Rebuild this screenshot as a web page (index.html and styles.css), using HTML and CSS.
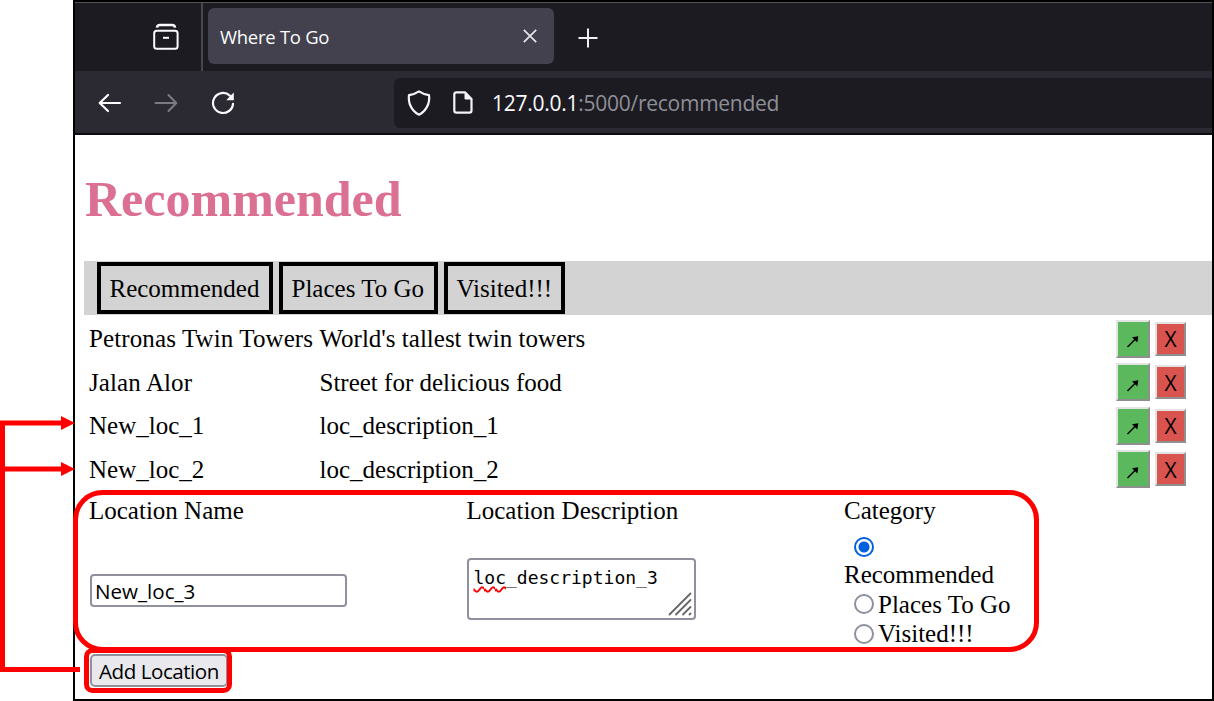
FILE: index.html
```html
<!DOCTYPE html>
<html lang="en">
<head>
<meta charset="utf-8">
<title>Where To Go</title>
<link rel="stylesheet" href="styles.css">
</head>
<body>
<div class="window">
  <header class="tabs">
    <div class="tabs-left">
      <svg width="28" height="28" viewBox="0 0 28 28" fill="none" stroke="#fbfbfe" stroke-width="2">
        <path d="M5 4.600Q5.300 2 8 2h12q2.700 0 3 2.600" stroke-width="2.600"/>
        <rect x="2.200" y="7.800" width="23.400" height="18" rx="2.500"/>
        <path d="M11 14.800h6"/>
      </svg>
    </div>
    <div class="tab">
      <span class="tab-title">Where To Go</span>
      <svg width="14" height="14" viewBox="0 0 14 14" stroke="#e6e6ea" stroke-width="1.700"><path d="M.8.8l12.400 12.400M13.200.8L.8 13.200"/></svg>
    </div>
    <svg class="plus" width="20" height="20" viewBox="0 0 20 20" stroke="#f0f0f4" stroke-width="2"><path d="M10 .5v19M.5 10h19"/></svg>
  </header>
  <div class="toolbar">
    <svg class="back" width="24" height="20" viewBox="0 0 24 20" fill="none" stroke="#fbfbfe" stroke-width="2.200" stroke-linecap="round" stroke-linejoin="round"><path d="M22 10H2M10 2L1.700 10l8.300 8"/></svg>
    <svg class="forward" width="24" height="20" viewBox="0 0 24 20" fill="none" stroke="#7b7a82" stroke-width="2" stroke-linecap="round" stroke-linejoin="round"><path d="M1.500 10H22M14.500 2L22.300 10l-7.800 8"/></svg>
    <svg class="reload" width="24" height="24" viewBox="0 0 24 24" fill="none" stroke="#fbfbfe" stroke-width="2.200"><path d="M18.800 4.600A10 10 0 1 0 22 12.800" stroke-linecap="round"/><path d="M22.800 1.500v7.700h-7.600z" fill="#fbfbfe" stroke="none"/></svg>
    <div class="url">
      <svg width="24" height="26" viewBox="0 0 24 26" fill="none" stroke="#f4f4f8" stroke-width="2.200" stroke-linejoin="round"><path d="M12 1.300Q16.500 4.300 22 5.200Q22.600 9.500 21.300 14Q18.500 21.500 12 24.700Q5.500 21.500 2.700 14Q1.400 9.500 2 5.200Q7.500 4.300 12 1.300z"/></svg>
      <svg class="page" width="20" height="23" viewBox="0 0 20 23" fill="none" stroke="#f4f4f8" stroke-width="2.200" stroke-linejoin="round"><path d="M12 1.300H3.500q-2.200 0-2.200 2.200v16q0 2.200 2.200 2.200h12.800q2.200 0 2.200-2.200V8z"/><path d="M12 1.300V8h6.500z" fill="#f4f4f8" stroke-width="1"/></svg>
      <span class="address"><b>127.0.0.1</b>:5000/recommended</span>
    </div>
  </div>
  <main class="content">
    <h1>Recommended</h1>
    <nav><a class="n1">Recommended</a><a class="n2">Places To Go</a><a class="n3">Visited!!!</a></nav>
    <div class="list">
      <div class="row"><span class="wide">Petronas Twin Towers</span><span>World's tallest twin towers</span><button class="go"><svg width="14" height="14" viewBox="0 0 14 14"><path d="M1.500 13L10 4.500" stroke="#000" stroke-width="1.500"/><path d="M6 3.200L12.300 2.200 11.300 8.500z"/></svg></button><button class="del">X</button></div>
      <div class="row"><span class="wide">Jalan Alor</span><span>Street for delicious food</span><button class="go"><svg width="14" height="14" viewBox="0 0 14 14"><path d="M1.500 13L10 4.500" stroke="#000" stroke-width="1.500"/><path d="M6 3.200L12.300 2.200 11.300 8.500z"/></svg></button><button class="del">X</button></div>
      <div class="row"><span>New_loc_1</span><span>loc_description_1</span><button class="go"><svg width="14" height="14" viewBox="0 0 14 14"><path d="M1.500 13L10 4.500" stroke="#000" stroke-width="1.500"/><path d="M6 3.200L12.300 2.200 11.300 8.500z"/></svg></button><button class="del">X</button></div>
      <div class="row"><span>New_loc_2</span><span>loc_description_2</span><button class="go"><svg width="14" height="14" viewBox="0 0 14 14"><path d="M1.500 13L10 4.500" stroke="#000" stroke-width="1.500"/><path d="M6 3.200L12.300 2.200 11.300 8.500z"/></svg></button><button class="del">X</button></div>
    </div>
    <form>
      <div class="fields">
        <div class="field"><label>Location Name</label><div class="input">New_loc_3</div></div>
        <div class="field"><label>Location Description</label>
          <div class="area"><span class="area-text"><span class="typo">loc</span>_description_3</span>
            <svg width="24" height="24" viewBox="0 0 24 24" stroke="#666" stroke-width="1.800" stroke-linecap="round"><path d="M1.500 22.500l21-21M8 22.500L22.500 8M15 22.500l7.500-7.500M21.500 22.500l1-1"/></svg></div>
        </div>
        <div class="field cat"><label>Category</label>
          <i class="radio on"></i>
          <span class="opt first">Recommended</span>
          <span class="opt"><i class="radio"></i>Places To Go</span>
          <span class="opt"><i class="radio"></i>Visited!!!</span>
        </div>
      </div>
      <button class="add" type="button">Add Location</button>
    </form>
  </main>
</div>
<svg class="notes" width="1214" height="701" viewBox="0 0 1214 701" fill="none" stroke="#f00" stroke-width="5">
  <rect x="75.500" y="492.500" width="961" height="157" rx="27"/>
  <rect x="86.500" y="650.500" width="143" height="40" rx="6"/>
  <path d="M80 669.500H2.500V423H62M2.500 469H62"/>
  <path d="M61 416l14 7-14 7zM61 462l14 7-14 7z" fill="#f00" stroke="none"/>
</svg>
</body>
</html>
```
FILE: styles.css
```css
* { box-sizing: border-box; }
body { margin: 0; background: #fff; position: relative; height: 701px; overflow: hidden; font-family: "Liberation Serif", serif; font-size: 25px; color: #000; }
svg { display: block; flex: none; }
.window { margin-left: 73px; width: 1141px; height: 701px; border: 2px solid #000; }
.tabs { height: 69px; background: #1c1b22; border-top: 1px solid #55545a; display: flex; align-items: center; }
.tabs-left { width: 128px; height: 68px; border-right: 2px solid #47464d; display: flex; align-items: center; padding: 0 0 0 77px; }
.tab { width: 346px; height: 56px; margin: 0 0 2px 5px; background: #42414d; border-radius: 6px; display: flex; align-items: center; justify-content: space-between; padding: 0 17px 0 12px; }
.tab-title { font: 18.500px/24px "Open Sans", sans-serif; letter-spacing: -.28px; color: #fbfbfe; padding-top: 2px; white-space: nowrap; }
.plus { margin: 1px 0 0 24px; }
.toolbar { height: 64px; background: #2b2a33; border-bottom: 2px solid #0c0c0d; display: flex; align-items: center; padding: 1px 0 0 23px; }
.forward { margin-left: 32px; }
.reload { margin-left: 33px; }
.url { margin-left: 159px; flex: 1; height: 50px; background: #1c1b22; border-radius: 6px 0 0 6px; display: flex; align-items: center; padding-left: 13px; }
.page { margin-left: 22px; }
.address { margin-left: 19px; font: 21px/30px "Open Sans", sans-serif; letter-spacing: -.26px; color: #8f8f97; white-space: nowrap; padding-top: 1px; }
.address b { font-weight: 400; color: #fbfbfe; }
.content { padding-left: 9px; }
h1 { margin: 35px 0 0; padding-left: 1px; font-size: 50px; line-height: 58px; color: #db7093; height: 91px; }
nav { height: 54px; background: #d3d3d3; display: flex; gap: 6px; padding: 1px 0 1px 13px; }
nav a { border: 4px solid #000; padding-left: 8.500px; line-height: 45px; white-space: nowrap; }
.n1 { width: 176px; }
.n2 { width: 159px; }
.n3 { width: 121px; }
.list { padding: 2px 0 0 5px; }
.row { height: 43.500px; display: grid; grid-template-columns: 230.500px 796.500px 34px 31px; align-items: center; white-space: nowrap; }
.row span { padding-top: 1px; }
.wide { letter-spacing: .11px; }
.row button { font: 21px/24px "Open Sans", sans-serif; padding: 1px 0 0; color: #000; border: 2.500px outset #e3e3e3; }
.go { width: 34px; height: 38px; background: #5cb85c; display: flex; align-items: center; justify-content: center; }
.go svg { margin: 4px 0 0; }
.del { width: 31px; height: 34px; margin-left: 5px; background: #d9534f; }
.fields { display: grid; grid-template-columns: 377.500px 377.500px 200px; padding-left: 5px; height: 163px; }
.field label { display: block; height: 30px; line-height: 30px; padding-top: 5px; white-space: nowrap; }
.input { width: 257px; height: 33px; margin: 53px 0 0 1px; border: 2px solid #8f8f9d; border-radius: 4px; font: 20.600px/30px "Open Sans", sans-serif; padding-left: 3px; }
.area { width: 229px; height: 62px; margin-top: 37px; border: 2px solid #8f8f9d; border-radius: 4px; display: flex; align-items: flex-end; padding: 0 2px 2px 5px; }
.area-text { font: 18px/24px "DejaVu Sans Mono", monospace; align-self: flex-start; padding-top: 6px; width: 195px; }
.typo { text-decoration: underline wavy #f00 1.500px; text-underline-offset: 2px; text-decoration-skip-ink: none; }
.radio { display: inline-block; width: 20px; height: 20px; border: 2.500px solid #8f8f9d; border-radius: 50%; flex: none; margin: 0 4px 0 10px; background: #fff; }
.on { display: block; border-color: #0060df; background: radial-gradient(circle, #0060df 5px, #fff 6px); margin-top: 16px; }
.opt { display: flex; align-items: center; height: 29.500px; line-height: 29px; white-space: nowrap; }
.first { margin-top: 3px; }
.add { display: block; margin: 0 0 0 6px; width: 138px; height: 33px; background: #e9e9ed; border: 2px solid #8f8f9d; border-radius: 5px; padding: 0; font: 20.600px/28px "Open Sans", sans-serif; letter-spacing: -.48px; color: #000; white-space: nowrap; }
.notes { position: absolute; left: 0; top: 0; }
```
